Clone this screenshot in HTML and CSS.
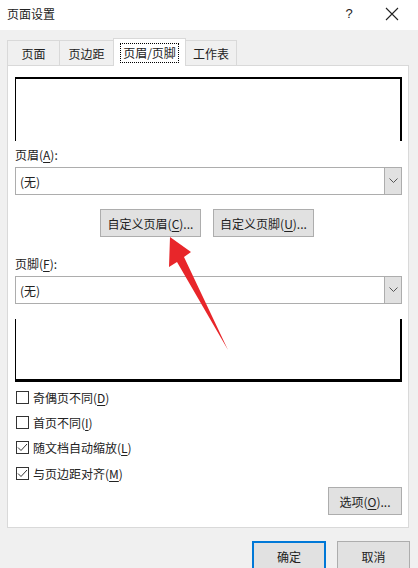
FILE: index.html
```html
<!DOCTYPE html>
<html><head><meta charset="utf-8"><link rel="stylesheet" href="styles.css"></head>
<body>
<div class="dialog">
  <div class="titlebar">
    <span class="title">页面设置</span>
    <span class="help">?</span>
    <span class="close"><svg width="14" height="14" viewBox="0 0 14 14"><path d="M1 1 L13 13 M13 1 L1 13" stroke="#222" stroke-width="1.1" fill="none"/></svg></span>
  </div>
  <div class="tabs">
    <div class="tab t1">页面</div>
    <div class="tab t2">页边距</div>
    <div class="tab active"><span class="focus">页眉/页脚</span></div>
    <div class="tab t4">工作表</div>
  </div>
  <div class="panel">
    <div class="preview head"></div>
    <div class="label">页眉(<u>A</u>):</div>
    <div class="select"><span class="val">(无)</span><span class="drop"><svg width="9" height="6" viewBox="0 0 9 6"><path d="M0.5 0.5 L4.5 4.5 L8.5 0.5" stroke="#555" fill="none"/></svg></span></div>
    <div class="btnrow">
      <div class="btn custom">自定义页眉(<u>C</u>)...</div>
      <div class="btn custom">自定义页脚(<u>U</u>)...</div>
    </div>
    <div class="label">页脚(<u>F</u>):</div>
    <div class="select"><span class="val">(无)</span><span class="drop"><svg width="9" height="6" viewBox="0 0 9 6"><path d="M0.5 0.5 L4.5 4.5 L8.5 0.5" stroke="#555" fill="none"/></svg></span></div>
    <div class="preview foot"></div>
    <div class="checks">
      <div class="check"><span class="box"></span>奇偶页不同(<u>D</u>)</div>
      <div class="check"><span class="box"></span>首页不同(<u>I</u>)</div>
      <div class="check"><span class="box"><svg width="11" height="11" viewBox="0 0 11 11"><path d="M1 5.5 L4 8.5 L10 2" stroke="#333" stroke-width="1" fill="none"/></svg></span>随文档自动缩放(<u>L</u>)</div>
      <div class="check"><span class="box"><svg width="11" height="11" viewBox="0 0 11 11"><path d="M1 5.5 L4 8.5 L10 2" stroke="#333" stroke-width="1" fill="none"/></svg></span>与页边距对齐(<u>M</u>)</div>
    </div>
    <div class="optrow"><div class="btn opt">选项(<u>O</u>)...</div></div>
  </div>
  <div class="footer">
    <div class="btn ok">确定</div>
    <div class="btn cancel">取消</div>
  </div>
  <svg class="arrow" width="418" height="568" viewBox="0 0 418 568"><polygon points="170,237 191,252 184,257 228,350 177,262 169,267" fill="#e8262a"/></svg>
</div>
</body></html>
```
FILE: styles.css
```css
* { box-sizing: border-box; }
html, body { margin: 0; padding: 0; }
body { background: #f0f0f0; font-family: "Noto Sans CJK SC", "Microsoft YaHei", sans-serif; font-size: 12px; color: #222; width: 418px; height: 568px; overflow: hidden; }
.dialog { position: relative; width: 418px; height: 568px; }
u { text-decoration: underline; text-underline-offset: 2px; }
.titlebar { height: 30px; background: #fff; display: flex; align-items: center; padding: 0 0 3px 7px; }
.title { font-size: 12px; flex: 1; }
.help { width: 14px; text-align: center; margin-right: 29px; font-family: "Liberation Sans", sans-serif; font-size: 13px; }
.close { width: 14px; height: 14px; margin-right: 19px; display: flex; }
.tabs { display: flex; align-items: flex-end; padding-left: 7px; margin-top: 8px; height: 27px; }
.tab { height: 25px; border: 1px solid #d9d9d9; border-bottom: none; background: #f0f0f0; display: flex; align-items: center; justify-content: center; margin-right: -1px; }
.t1 { width: 53px; }
.t2 { width: 55px; }
.t4 { width: 52px; }
.tab.active { width: 73px; background: #fff; position: relative; z-index: 2; margin-bottom: -1px; height: 28px; }
.focus { border: 1px dotted #000; padding: 1px 2px; line-height: 16px; }
.panel { margin-left: 7px; width: 402px; height: 463px; background: #fff; border: 1px solid #d9d9d9; padding: 11px 6px 0 7px; position: relative; }
.preview { width: 387px; background: #fff; }
.head { height: 64px; border-top: 2px solid #000; border-left: 1px solid #000; border-right: 2px solid #000; }
.label { margin-top: 5px; height: 18px; line-height: 18px; }
.select { margin-top: 3px; height: 28px; width: 387px; border: 1px solid #adadad; display: flex; align-items: center; }
.val { flex: 1; padding-left: 4px; }
.drop { width: 17px; height: 26px; background: #e1e1e1; border-left: 1px solid #adadad; display: flex; align-items: center; justify-content: center; }
.btnrow { display: flex; gap: 12px; padding-left: 85px; margin-top: 14px; margin-bottom: 18px; }
.btn { height: 28px; border: 1px solid #adadad; background: #e1e1e1; display: flex; align-items: center; justify-content: center; }
.custom { width: 101px; }
.foot { margin-top: 15px; height: 63px; border-left: 1px solid #000; border-right: 2px solid #000; border-bottom: 3px solid #000; }
.checks { margin-top: 5px; display: flex; flex-direction: column; gap: 5.4px; padding-left: 1px; }
.check { display: flex; align-items: center; height: 20px; }
.box { width: 13px; height: 13px; border: 1px solid #333; margin-right: 4px; display: flex; align-items: center; justify-content: center; background: #fff; }
.optrow { display: flex; justify-content: flex-end; margin-top: 4px; }
.opt { width: 74px; }
.footer { display: flex; gap: 11px; padding-left: 252px; margin-top: 13px; }
.ok { width: 74px; height: 30px; border: 2px solid #0078d7; }
.cancel { width: 73px; height: 30px; }
.arrow { position: absolute; left: 0; top: 0; pointer-events: none; }
```
